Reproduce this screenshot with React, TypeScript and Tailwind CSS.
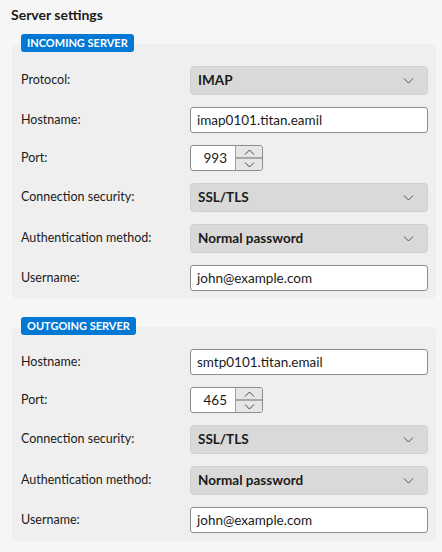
import React from 'react'

const font = { fontFamily: 'Lato, "Noto Sans", sans-serif' }

function Chevron({ up = false, className = '' }: { up?: boolean; className?: string }) {
  return (
    <svg viewBox="0 0 10 6" className={className} fill="none" stroke="currentColor" strokeWidth="1">
      {up ? <path d="M0.5 5.5 L5 1 L9.5 5.5" /> : <path d="M0.5 0.5 L5 5 L9.5 0.5" />}
    </svg>
  )
}

function Select({ value }: { value: string }) {
  return (
    <div className="flex h-[29px] w-[238px] items-center justify-between rounded-[4px] border border-[#d0d0d0] bg-[#d9d9d9] pl-[7px] pr-[13px]">
      <span className="text-[13.5px] font-bold text-[#1b1b1b]">{value}</span>
      <Chevron className="h-[6px] w-[11px] text-[#555]" />
    </div>
  )
}

function TextInput({ value }: { value: string }) {
  return (
    <div className="flex h-[26px] w-[238px] items-center rounded-[3px] border border-[#8d8d8d] bg-white px-[6px]">
      <span className="text-[13.5px] text-[#1b1b1b]">{value}</span>
    </div>
  )
}

function Spinner({ value }: { value: string }) {
  return (
    <div className="flex h-[26px] w-[73px] overflow-hidden rounded-[3px] border border-[#8d8d8d] bg-white">
      <div className="flex w-[44px] items-center justify-end pr-[8px] text-[13.5px] text-[#1b1b1b]">{value}</div>
      <div className="flex flex-1 flex-col border-l border-[#a0a0a0]">
        <div className="flex flex-1 items-center justify-center bg-[#e6e6e6]">
          <Chevron up className="h-[6px] w-[11px] text-[#444]" />
        </div>
        <div className="h-[2px] bg-[#a8a8a8]" />
        <div className="flex flex-1 items-center justify-center bg-[#e6e6e6]">
          <Chevron className="h-[6px] w-[11px] text-[#444]" />
        </div>
      </div>
    </div>
  )
}

type Row = { label: string; kind: 'select' | 'input' | 'spin'; value: string }

function Section({ title, rows }: { title: string; rows: Row[] }) {
  return (
    <div className="flex flex-col">
      <div className="relative z-10 ml-[9px] self-start rounded-[3px] bg-[#0078d4] px-[6px] text-[11px] font-bold leading-[18px] text-white">
        {title}
      </div>
      <div className="-mt-[8px] flex flex-col gap-[12px] rounded-[6px] bg-[#efefef] pb-[8px] pl-[9px] pr-[8px] pt-[22px]">
        {rows.map(r => (
          <div key={r.label} className="flex items-center">
            <span className="w-[169px] text-[12.5px] text-[#1b1b1b]">{r.label}</span>
            <div className="flex w-[238px]">
              {r.kind === 'select' && <Select value={r.value} />}
              {r.kind === 'input' && <TextInput value={r.value} />}
              {r.kind === 'spin' && <Spinner value={r.value} />}
            </div>
          </div>
        ))}
      </div>
    </div>
  )
}

export default function App() {
  return (
    <div className="h-[552px] w-[442px] bg-[#f6f6f6] pl-[12px] pr-[6px] pt-[6px]" style={font}>
      <h1 className="-ml-[1px] text-[14px] font-bold leading-[18px] text-[#1b1b1b]">Server settings</h1>
      <div className="mt-[10px] flex flex-col gap-[18px]">
        <Section
          title="INCOMING SERVER"
          rows={[
            { label: 'Protocol:', kind: 'select', value: 'IMAP' },
            { label: 'Hostname:', kind: 'input', value: 'imap0101.titan.eamil' },
            { label: 'Port:', kind: 'spin', value: '993' },
            { label: 'Connection security:', kind: 'select', value: 'SSL/TLS' },
            { label: 'Authentication method:', kind: 'select', value: 'Normal password' },
            { label: 'Username:', kind: 'input', value: 'john@example.com' },
          ]}
        />
        <Section
          title="OUTGOING SERVER"
          rows={[
            { label: 'Hostname:', kind: 'input', value: 'smtp0101.titan.email' },
            { label: 'Port:', kind: 'spin', value: '465' },
            { label: 'Connection security:', kind: 'select', value: 'SSL/TLS' },
            { label: 'Authentication method:', kind: 'select', value: 'Normal password' },
            { label: 'Username:', kind: 'input', value: 'john@example.com' },
          ]}
        />
      </div>
    </div>
  )
}
